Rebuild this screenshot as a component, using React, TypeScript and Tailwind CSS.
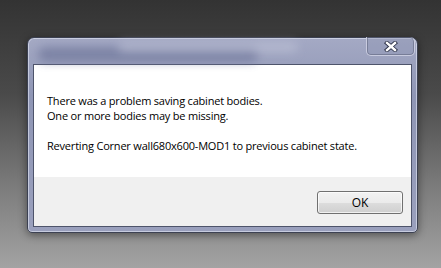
import React from 'react';

const MESSAGE_LINES = [
    'There was a problem saving cabinet bodies.',
    'One or more bodies may be missing.',
];

// Aero-style close glyph: white cross with a dark rim
const CloseGlyph = () => (
    <svg width="14" height="11" viewBox="0 0 14 11">
        <path d="M3 2 L11 9 M11 2 L3 9" stroke="#2b3046" strokeWidth="4.2" strokeLinecap="square" />
        <path d="M3 2 L11 9 M11 2 L3 9" stroke="#ffffff" strokeWidth="2.4" strokeLinecap="square" />
    </svg>
);

export default function App() {
    return (
        <div className="h-[268px] w-full overflow-hidden bg-[linear-gradient(to_bottom,#333333_0%,#4a4a4a_35%,#7c7c7c_70%,#a3a3a3_100%)] pt-[37px] pl-[27px] font-['Open_Sans',sans-serif]">
            {/* Window */}
            <div className="relative w-[391px] h-[196px] rounded-t-[7px] rounded-b-[5px] border border-[#3c4152] bg-[linear-gradient(to_bottom,#a4a9c4_0%,#8f96b5_30%,#9aa0bd_100%)] px-[5px] pb-[5px] shadow-[0_2px_8px_rgba(0,0,0,0.45),inset_0_0_0_1px_rgba(235,238,250,0.55)] flex flex-col">
                {/* blurred title behind glass */}
                <div className="absolute left-[10px] top-[9px] w-[220px] h-[15px] rounded-full bg-[#6f769a] opacity-70 blur-[5px]" />
                <div className="absolute left-[90px] top-[4px] w-[180px] h-[10px] rounded-full bg-[#c0c4d8] opacity-60 blur-[5px]" />

                {/* Title bar */}
                <div className="relative h-[26px] flex items-start justify-end">
                    <button className="-mr-[3px] -mt-[1px] w-[49px] h-[19px] rounded-b-[5px] rounded-tr-[5px] border border-t-0 border-[#d5d8e8]/80 bg-[#8c93b2]/40 shadow-[inset_0_0_0_1px_rgba(60,65,85,0.35)] flex items-center justify-center">
                        <CloseGlyph />
                    </button>
                </div>

                {/* Client area */}
                <div className="flex-1 border border-[#4e546b] bg-white flex flex-col text-[11px] tracking-[-0.2px] leading-[15px] text-black">
                    <div className="h-[112px] pl-[13px] pt-[28px]">
                        {MESSAGE_LINES.map(line => (
                            <div key={line}>{line}</div>
                        ))}
                        <div className="mt-[15px]">Reverting Corner wall680x600-MOD1 to previous cabinet state.</div>
                    </div>
                    <div className="flex-1 bg-[#f0f0f0] flex justify-end items-start pt-[14px] pr-[8px]">
                        <button className="w-[86px] h-[23px] rounded-[3px] border border-[#707070] bg-[linear-gradient(to_bottom,#f2f2f2_0%,#ebebeb_50%,#dddddd_51%,#cfcfcf_100%)] shadow-[inset_0_0_0_1px_rgba(255,255,255,0.7)] text-[12px] tracking-normal leading-none text-black">
                            OK
                        </button>
                    </div>
                </div>
            </div>
        </div>
    );
}
